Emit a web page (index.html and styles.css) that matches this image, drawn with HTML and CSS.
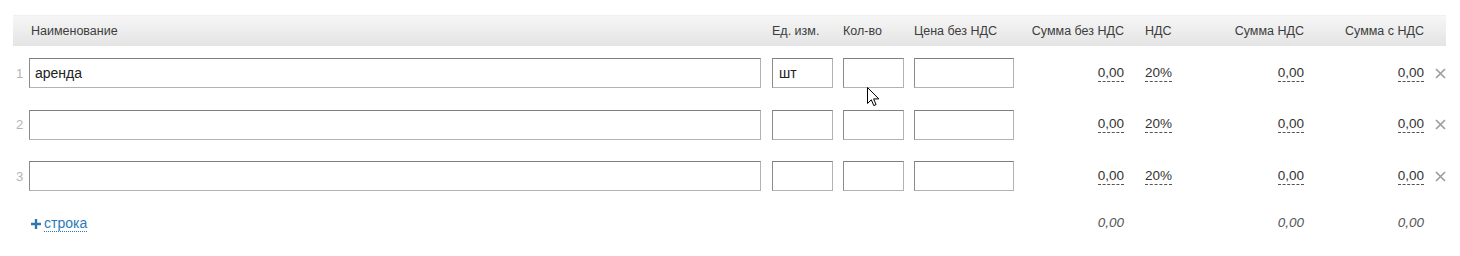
FILE: index.html
```html
<!DOCTYPE html>
<html lang="ru">
<head>
<meta charset="utf-8">
<title>Позиции</title>
<link rel="stylesheet" href="styles.css">
</head>
<body>
<div class="table">
  <div class="grid head">
    <div class="h-name">Наименование</div>
    <div>Ед. изм.</div>
    <div>Кол-во</div>
    <div>Цена без НДС</div>
    <div class="num">Сумма без НДС</div>
    <div class="h-vat">НДС</div>
    <div class="num">Сумма НДС</div>
    <div class="num">Сумма с НДС</div>
    <div></div>
  </div>

  <div class="grid row">
    <div class="idx">1</div>
    <div><input class="inp inp-name" type="text" value="аренда"></div>
    <div><input class="inp inp-sm" type="text" value="шт"></div>
    <div><input class="inp inp-sm" type="text" value=""></div>
    <div><input class="inp inp-price" type="text" value=""></div>
    <div class="num"><span class="dash">0,00</span></div>
    <div class="vat"><span class="dash">20%</span></div>
    <div class="num"><span class="dash">0,00</span></div>
    <div class="num"><span class="dash">0,00</span></div>
    <div class="del"><svg width="11" height="11" viewBox="0 0 11 11"><path d="M1 1L10 10M10 1L1 10" stroke="#9d9d9d" stroke-width="1.7"/></svg></div>
  </div>

  <div class="grid row">
    <div class="idx">2</div>
    <div><input class="inp inp-name" type="text" value=""></div>
    <div><input class="inp inp-sm" type="text" value=""></div>
    <div><input class="inp inp-sm" type="text" value=""></div>
    <div><input class="inp inp-price" type="text" value=""></div>
    <div class="num"><span class="dash">0,00</span></div>
    <div class="vat"><span class="dash">20%</span></div>
    <div class="num"><span class="dash">0,00</span></div>
    <div class="num"><span class="dash">0,00</span></div>
    <div class="del"><svg width="11" height="11" viewBox="0 0 11 11"><path d="M1 1L10 10M10 1L1 10" stroke="#9d9d9d" stroke-width="1.7"/></svg></div>
  </div>

  <div class="grid row">
    <div class="idx">3</div>
    <div><input class="inp inp-name" type="text" value=""></div>
    <div><input class="inp inp-sm" type="text" value=""></div>
    <div><input class="inp inp-sm" type="text" value=""></div>
    <div><input class="inp inp-price" type="text" value=""></div>
    <div class="num"><span class="dash">0,00</span></div>
    <div class="vat"><span class="dash">20%</span></div>
    <div class="num"><span class="dash">0,00</span></div>
    <div class="num"><span class="dash">0,00</span></div>
    <div class="del"><svg width="11" height="11" viewBox="0 0 11 11"><path d="M1 1L10 10M10 1L1 10" stroke="#9d9d9d" stroke-width="1.7"/></svg></div>
  </div>

  <div class="grid totals">
    <div></div>
    <div class="add"><svg class="plus" width="10" height="10" viewBox="0 0 10 10"><path d="M0 5H10M5 0V10" stroke="#2b78b4" stroke-width="2.4"/></svg><a class="add-link" href="#">строка</a></div>
    <div></div>
    <div></div>
    <div></div>
    <div class="num tot">0,00</div>
    <div></div>
    <div class="num tot">0,00</div>
    <div class="num tot">0,00</div>
    <div></div>
  </div>

  <svg class="cursor" width="13" height="20" viewBox="0 0 13 20"><path d="M0.5 0.5V16.5L4.3 12.8L6.8 18.6L9.1 17.6L6.6 11.9H11.8Z" fill="#fff" stroke="#000" stroke-width="1" stroke-linejoin="round"/></svg>
</div>
</body>
</html>
```

FILE: styles.css
```css
* { box-sizing: border-box; }

html, body {
  margin: 0;
  padding: 0;
  background: #fff;
}

body {
  font-family: Arial, "Liberation Sans", sans-serif;
  color: #333;
  padding: 15px 0 0 13px;
}

.table {
  position: relative;
  width: 1433px;
}

.grid {
  display: grid;
  grid-template-columns: 16px 743px 71px 71px 100px 110px 76px 104px 120px 22px;
  align-items: center;
}

.head {
  height: 31px;
  font-size: 12.5px;
  color: #3c3c3c;
  background: linear-gradient(#f6f6f6, #e4e4e4);
  border-top: 1px solid #f0f0f0;
}

.head > div { white-space: nowrap; }

.h-name {
  grid-column: 1 / 3;
  padding-left: 18px;
}

.h-vat { padding-left: 21px; }

.num {
  text-align: right;
  white-space: nowrap;
}

.row {
  padding: 12px 0 9.5px;
  font-size: 13.5px;
}

.idx {
  color: #b4b4b4;
  font-size: 13px;
  padding-left: 3px;
}

.inp {
  display: block;
  height: 30px;
  margin: 0;
  padding: 0 5px;
  font-family: Arial, "Liberation Sans", sans-serif;
  font-size: 14px;
  color: #222;
  background: #fff;
  border: 1px solid;
  border-color: #7f7f7f #b2b2b2 #b2b2b2 #8c8c8c;
  border-radius: 0;
  outline: none;
}

.inp-name { width: 732px; }
.inp-sm { width: 61px; padding-left: 6px; }
.inp-price { width: 100px; }

.dash {
  display: inline-block;
  line-height: 15px;
  padding-bottom: 1px;
  border-bottom: 1px dashed #555;
  color: #333;
}

.vat { padding-left: 21px; }

.del {
  padding-left: 11px;
  display: flex;
  align-items: center;
}

.del svg { display: block; }

.totals {
  padding-top: 13px;
  height: 44px;
  align-items: start;
  line-height: 18px;
}

.tot {
  font-size: 13.5px;
  font-style: italic;
  color: #555;
}

.add {
  display: flex;
  align-items: center;
  padding-left: 2px;
  height: 18px;
}

.plus {
  display: block;
  margin-top: 2px;
  margin-right: 3px;
}

.add-link {
  font-size: 14px;
  color: #2a79b8;
  text-decoration: none;
  line-height: 15px;
  border-bottom: 1px dotted #2a79b8;
  margin-top: 3px;
}

.cursor {
  position: absolute;
  left: 854px;
  top: 72px;
}
```
